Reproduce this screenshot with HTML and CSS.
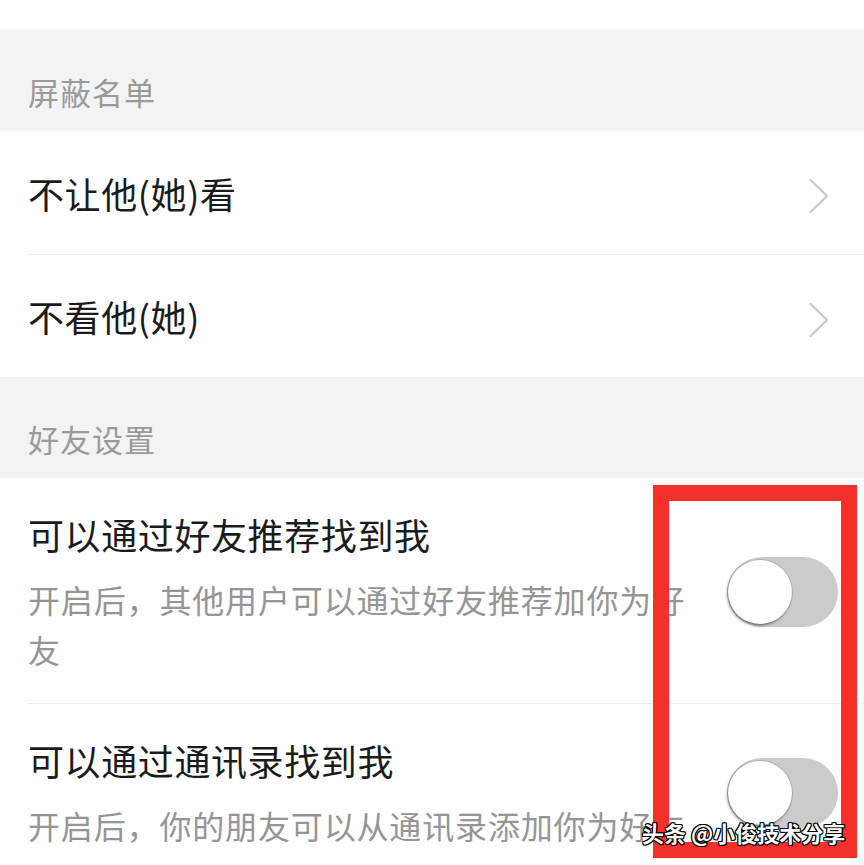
FILE: index.html
```html
<!DOCTYPE html>
<html lang="zh-CN">
<head>
<meta charset="utf-8">
<title>隐私设置</title>
<link rel="stylesheet" href="styles.css">
</head>
<body>
<div class="screen">
  <div class="cell-tail"></div>

  <div class="group-title">屏蔽名单</div>
  <div class="group">
    <div class="cell cell-link">
      <span class="cell-label">不让他(她)看</span>
      <svg class="chevron" width="22" height="36" viewBox="0 0 22 36" aria-hidden="true">
        <polyline points="2.5,2 19,18 2.5,34" />
      </svg>
    </div>
    <div class="cell cell-link">
      <span class="cell-label">不看他(她)</span>
      <svg class="chevron" width="22" height="36" viewBox="0 0 22 36" aria-hidden="true">
        <polyline points="2.5,2 19,18 2.5,34" />
      </svg>
    </div>
  </div>

  <div class="group-title">好友设置</div>
  <div class="group">
    <div class="cell cell-switch">
      <div class="cell-body">
        <div class="cell-label">可以通过好友推荐找到我</div>
        <div class="cell-desc">开启后，其他用户可以通过好友推荐加你为好友</div>
      </div>
      <span class="switch"><span class="switch-knob"></span></span>
    </div>
    <div class="cell cell-switch">
      <div class="cell-body">
        <div class="cell-label">可以通过通讯录找到我</div>
        <div class="cell-desc">开启后，你的朋友可以从通讯录添加你为好友</div>
      </div>
      <span class="switch"><span class="switch-knob"></span></span>
    </div>
  </div>

  <div class="highlight-box"></div>
  <div class="watermark">头条 @小俊技术分享</div>
</div>
</body>
</html>
```

FILE: styles.css
```css
* {
  box-sizing: border-box;
}

html,
body {
  margin: 0;
  padding: 0;
  background: #ffffff;
}

body {
  font-family: "Noto Sans CJK SC", "Noto Sans", sans-serif;
  color: #1b1b1b;
}

.screen {
  position: relative;
  width: 864px;
  height: 865px;
  overflow: hidden;
  background: #ffffff;
}

/* bottom of the cell above the visible area */
.cell-tail {
  height: 30px;
  background: #ffffff;
}

.group-title {
  height: 101px;
  padding: 46px 0 0 28px;
  background: #f3f3f3;
  color: #9a9a9a;
  font-size: 31px;
  line-height: 31px;
  letter-spacing: 1px;
}

.group {
  padding-left: 28px;
  background: #ffffff;
}

.cell + .cell {
  border-top: 1px solid #ececec;
}

.cell-label {
  font-size: 36px;
  line-height: 50px;
  letter-spacing: 0.6px;
  color: #1b1b1b;
}

/* navigation rows */
.cell-link {
  display: flex;
  align-items: center;
  justify-content: space-between;
  height: 123px;
  padding-right: 34px;
}

.chevron {
  margin-top: 7px;
  fill: none;
  stroke: #c9c9c9;
  stroke-width: 2.4;
  stroke-linecap: round;
  stroke-linejoin: round;
}

/* switch rows */
.cell-switch {
  display: flex;
  align-items: center;
  gap: 20px;
  padding: 31px 26px 29px 0;
}

.cell-body {
  flex: 1;
  min-width: 0;
}

.cell-desc {
  margin-top: 15px;
  font-size: 32px;
  line-height: 50px;
  letter-spacing: 0.85px;
  color: #959595;
}

.switch {
  flex: none;
  display: flex;
  align-items: center;
  width: 111px;
  height: 70px;
  padding-left: 1px;
  border-radius: 35px;
  background: #cbcbcb;
}

.switch-knob {
  width: 64px;
  height: 64px;
  border-radius: 50%;
  background: #ffffff;
  box-shadow: 0 0 0 1px rgba(0, 0, 0, 0.12), -1px 2px 3px rgba(0, 0, 0, 0.35);
}

/* red annotation frame drawn over the switches */
.highlight-box {
  position: absolute;
  left: 653px;
  top: 485px;
  width: 204px;
  height: 373px;
  border: 16px solid #f4302a;
}

.watermark {
  position: absolute;
  left: 642px;
  top: 820px;
  font-size: 22px;
  line-height: 24px;
  font-weight: 700;
  color: #ffffff;
  white-space: nowrap;
  text-shadow:
    1px 1px 0 #000, -1px -1px 0 #000, 1px -1px 0 #000, -1px 1px 0 #000,
    0 1px 0 #000, 0 -1px 0 #000, 1px 0 0 #000, -1px 0 0 #000;
}
```
